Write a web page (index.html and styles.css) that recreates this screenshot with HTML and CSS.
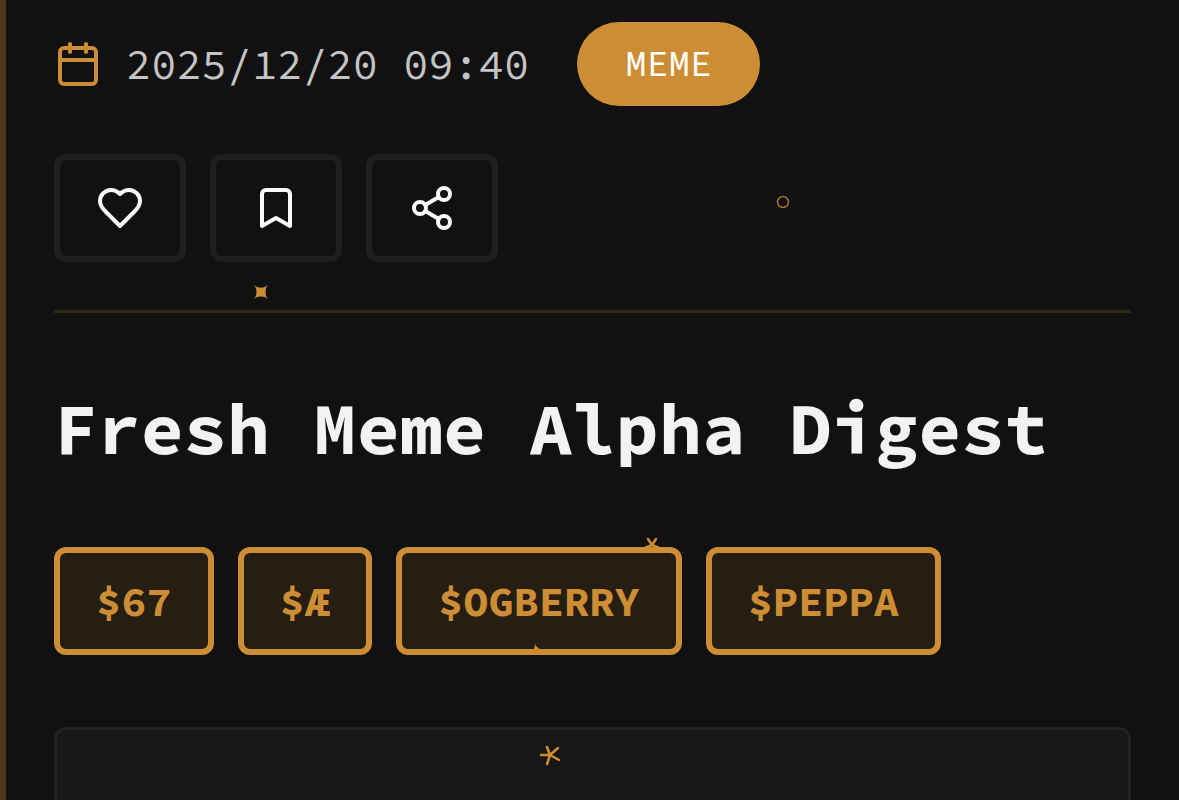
FILE: index.html
```html
<!DOCTYPE html>
<html lang="en">
<head>
    <meta charset="UTF-8">
    <meta name="viewport" content="width=device-width, initial-scale=1.0">
    <title>Fresh Meme Alpha Digest</title>
    <link rel="stylesheet" href="styles.css">
</head>
<body>

<article class="post">
    <header class="post-header">
        <div class="post-meta">
            <div class="post-date">
                <svg class="icon" viewBox="0 0 24 24" aria-hidden="true">
                    <path d="M8 2v4M16 2v4M3 10h18"/>
                    <rect x="3" y="4" width="18" height="18" rx="2"/>
                </svg>
                <time datetime="2025-12-20T09:40">2025/12/20 09:40</time>
            </div>
            <span class="category">MEME</span>
        </div>
        <div class="post-actions">
            <button class="action" type="button" aria-label="Like">
                <svg class="icon" viewBox="0 0 24 24" aria-hidden="true">
                    <path d="M19 14c1.49-1.46 3-3.21 3-5.5A5.5 5.5 0 0 0 16.5 3c-1.76 0-3 .5-4.5 2-1.5-1.5-2.74-2-4.5-2A5.5 5.5 0 0 0 2 8.5c0 2.3 1.5 4.05 3 5.5l7 7Z"/>
                </svg>
            </button>
            <button class="action" type="button" aria-label="Bookmark">
                <svg class="icon" viewBox="0 0 24 24" aria-hidden="true">
                    <path d="m19 21-7-4-7 4V5a2 2 0 0 1 2-2h10a2 2 0 0 1 2 2v16z"/>
                </svg>
            </button>
            <button class="action" type="button" aria-label="Share">
                <svg class="icon" viewBox="0 0 24 24" aria-hidden="true">
                    <circle cx="18" cy="5" r="3"/>
                    <circle cx="6" cy="12" r="3"/>
                    <circle cx="18" cy="19" r="3"/>
                    <path d="M8.59 13.51l6.83 3.98M15.41 6.51l-6.82 3.98"/>
                </svg>
            </button>
        </div>
    </header>

    <h1 class="post-title">Fresh Meme Alpha Digest</h1>

    <div class="tags">
        <a class="tag" href="#67">$67</a>
        <a class="tag" href="#ae">$Æ</a>
        <a class="tag" href="#ogberry">$OGBERRY</a>
        <a class="tag" href="#peppa">$PEPPA</a>
    </div>

    <section class="card"></section>
</article>

<!-- floating particles -->
<div class="particles" aria-hidden="true">
    <svg class="particle ring" viewBox="0 0 24 24"><circle cx="12" cy="12" r="5.5"/></svg>
    <svg class="particle spark" viewBox="0 0 24 24"><path d="M5 5L8 7Q12 8 16 7L19 5L17 8Q16 12 17 16L19 19L16 17Q12 16 8 17L5 19L7 16Q8 12 7 8Z"/></svg>
    <svg class="particle star-top" viewBox="0 0 24 24"><path d="M12 12L8 6M12 12L16 6M12 12L5 15M12 12L19 15"/></svg>
    <svg class="particle spark-low" viewBox="0 0 24 24"><path d="M10 4Q12 8 17 10L14 13L15 15H7L9 10Z"/></svg>
    <svg class="particle star" viewBox="0 0 24 24"><path d="M12 12H3M12 12L9 4M12 12L20 5M12 12L21 17M12 12L9 21"/></svg>
</div>

</body>
</html>
```
FILE: styles.css
```css
* {
    box-sizing: border-box;
}
body {
    margin: 0;
    background: #111;
    color: #f2f2f2;
    font-family: "Source Code Pro", "Liberation Mono", monospace;
    overflow: hidden;
}
.post {
    display: flex;
    flex-direction: column;
    min-height: 100vh;
    padding: 22px 48px 0;
    border-left: 6px solid #4e3719;
}
.post-header {
    display: flex;
    flex-direction: column;
    gap: 48px;
    padding-bottom: 48px;
    border-bottom: 3px solid #2f2714;
}
.post-meta {
    display: flex;
    align-items: center;
    gap: 48px;
}
.post-date {
    display: flex;
    align-items: center;
    gap: 24px;
    color: #c4c4c4;
    font-size: 42px;
    line-height: 60px;
}
.post-date .icon {
    color: #cd8d35;
}
.icon {
    display: block;
    width: 48px;
    height: 48px;
    fill: none;
    stroke: currentColor;
    stroke-width: 2;
    stroke-linecap: round;
    stroke-linejoin: round;
}
.category {
    padding: 12px 48px;
    border-radius: 42px;
    background: #cd8d35;
    color: #fff;
    font-size: 36px;
    line-height: 60px;
}
.post-actions {
    display: flex;
    gap: 24px;
}
.action {
    padding: 24px 36px;
    border: 6px solid #1f1f1f;
    border-radius: 12px;
    background: transparent;
    color: #f8f8f8;
    cursor: pointer;
}
.post-title {
    margin: 66px 0 68px;
    font-size: 72px;
    font-weight: 700;
    line-height: 100px;
}
.tags {
    display: flex;
    flex-wrap: wrap;
    gap: 24px;
}
.tag {
    padding: 18px 36px;
    border: 6px solid #cd8d35;
    border-radius: 12px;
    background: #261e13;
    color: #cd8d35;
    font-size: 42px;
    font-weight: 700;
    line-height: 60px;
    text-decoration: none;
}
.card {
    flex: 1;
    margin-top: 72px;
    border: 3px solid #222;
    border-bottom: 0;
    border-radius: 12px 12px 0 0;
    background: #171717;
}

.particles {
    position: fixed;
    inset: 0;
    pointer-events: none;
}
.particle {
    position: absolute;
    width: 24px;
    height: 24px;
    fill: #cd8d35;
}
.ring {
    left: 771px;
    top: 190px;
    fill: none;
    stroke: #a87026;
    stroke-width: 1.5;
}
.spark {
    left: 249px;
    top: 280px;
}
.star-top,
.star {
    fill: none;
    stroke: #cd8d35;
    stroke-width: 2.5;
    stroke-linecap: round;
}
.star-top {
    left: 640px;
    top: 533px;
}
.spark-low {
    left: 525px;
    top: 640px;
}
.star {
    left: 538px;
    top: 743px;
}
```
